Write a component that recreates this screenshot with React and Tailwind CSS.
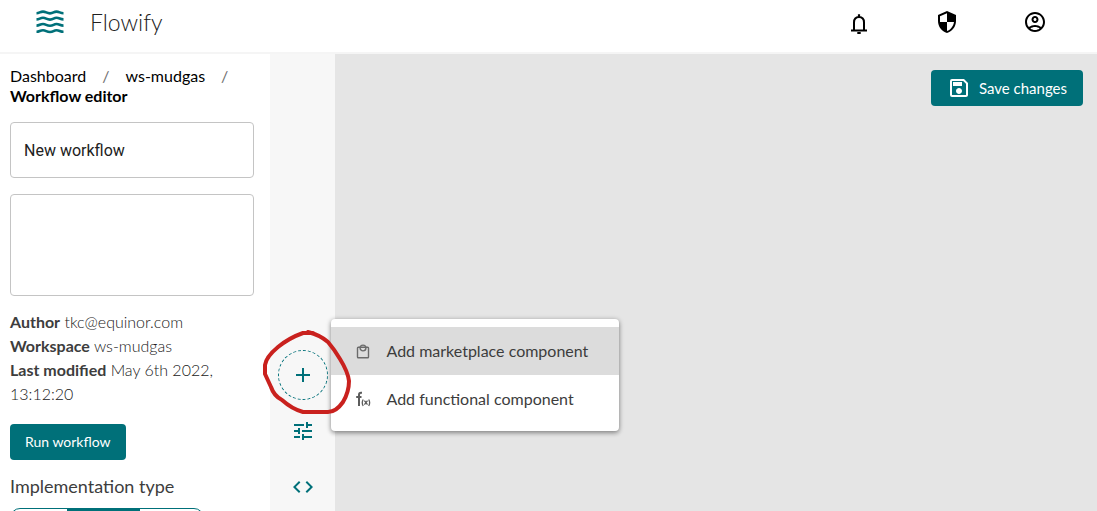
import React from "react";
import {
  MdSecurity,
  MdOutlineAccountCircle,
  MdOutlineSave,
  MdAdd,
  MdTune,
  MdCode,
} from "react-icons/md";

function Logo() {
  return (
    <svg className="h-6 w-7" viewBox="0 0 28 24" fill="none" stroke="#007079" strokeWidth="2.6" aria-hidden="true">
      {[2.6, 8.8, 15, 21.2].map((y) => (
        <path key={y} d={`M0.5 ${y + 0.6}C3.5 ${y + 0.6} 4 ${y - 1} 7 ${y - 1}S10.500 ${y + 0.8} 14 ${y + 0.8}S17.500 ${y - 1} 20.500 ${y - 1}S24 ${y + 0.6} 27.500 ${y + 0.6}`} />
      ))}
    </svg>
  );
}

function BellIcon() {
  return (
    <svg className="size-6" viewBox="0 0 24 24" fill="none" stroke="currentColor" strokeWidth="2" aria-hidden="true">
      <path d="M7 20V12.500C7 9 9 7 12 7S17 9 17 12.500V20M4 20.500H20" />
      <path d="M12 4.300V7M10.300 23H13.700" strokeWidth="2.2" />
    </svg>
  );
}

function BagIcon() {
  return (
    <svg className="size-4 shrink-0" viewBox="0 0 16 16" fill="none" stroke="#6b6b6b" strokeWidth="1.4" aria-hidden="true">
      <rect x="2.500" y="4.300" width="11" height="10.500" rx="0.8" />
      <circle cx="8" cy="5" r="2.900" />
    </svg>
  );
}

function FunctionIcon() {
  return (
    <svg className="size-4 shrink-0" viewBox="0 0 16 16" fill="none" stroke="#5c5c5c" aria-hidden="true">
      <path strokeWidth="2" d="M7 1.800H6Q4 1.800 4 4V15M1.200 6H6.500" />
      <path strokeWidth="1.300" d="M8.200 8.500Q6.300 11.700 8.200 15M13.700 8.500Q15.600 11.700 13.700 15M9.400 9.700L12.500 13.700M12.500 9.700L9.400 13.700" />
    </svg>
  );
}

function Header() {
  return (
    <header className="flex h-[54px] shrink-0 items-start justify-between border-b-2 border-[#f5f5f5] pt-[10px] pr-[50px] pl-9">
      <div className="flex items-center gap-[26px]">
        <Logo />
        <span className="text-[23px] leading-6 font-light text-[#202020]">Flowify</span>
      </div>
      <nav className="flex gap-16 text-2xl text-black" aria-label="Account">
        <button aria-label="Notifications"><BellIcon /></button>
        <button aria-label="Administration"><MdSecurity /></button>
        <button aria-label="Profile"><MdOutlineAccountCircle /></button>
      </nav>
    </header>
  );
}

function Sidebar() {
  return (
    <aside className="flex w-[270px] shrink-0 flex-col overflow-hidden pt-3 pr-4 pl-[10px] text-[#3d3d3d]">
      <nav aria-label="Breadcrumb" className="shrink-0">
        <ol className="flex flex-wrap text-base leading-5 text-black">
          <li><a href="#dashboard">Dashboard</a></li>
          <li className="px-4 text-[#6f6f6f]" aria-hidden="true">/</li>
          <li><a href="#workspace">ws-mudgas</a></li>
          <li className="px-4 text-[#6f6f6f]" aria-hidden="true">/</li>
          <li className="w-full font-bold" aria-current="page">Workflow editor</li>
        </ol>
      </nav>
      <input
        aria-label="Workflow name"
        defaultValue="New workflow"
        className="mt-4 h-14 w-full shrink-0 rounded-sm border border-[#c4c4c4] px-[13px] font-['Roboto',sans-serif] text-base text-[#212121]"
      />
      <textarea
        aria-label="Description"
        className="mt-4 h-[102px] w-full shrink-0 resize-none rounded-sm border border-[#c4c4c4] p-3"
      />
      <div className="mt-[14px] shrink-0 text-base leading-6 font-light text-[#202020]">
        <p><b className="font-bold text-[#3d3d3d]">Author</b> tkc@equinor.com</p>
        <p><b className="font-bold text-[#3d3d3d]">Workspace</b> ws-mudgas</p>
        <p><b className="font-bold text-[#3d3d3d]">Last modified</b> May 6th 2022, 13:12:20</p>
      </div>
      <button className="mt-[18px] h-9 shrink-0 self-start rounded-sm bg-[#007079] px-[15px] text-sm text-white">Run workflow</button>
      <h2 className="mt-4 shrink-0 text-lg leading-5">Implementation type</h2>
      <div className="mt-3 flex h-9 w-[194px] shrink-0 overflow-hidden rounded-[10px] border border-[#007079]">
        <button className="w-14" aria-label="First type" />
        <button className="flex-1 bg-[#007079]" aria-label="Second type" />
        <button className="w-[63px]" aria-label="Third type" />
      </div>
    </aside>
  );
}

function AddMenu() {
  return (
    <div role="menu" className="absolute top-[-31px] left-[53px] w-72 rounded-sm bg-white pt-2 pb-2 text-base text-[#3d3d3d] shadow-[0_1px_5px_rgba(0,0,0,0.4),0_3px_4px_rgba(0,0,0,0.12)]">
      <button role="menuitem" className="flex h-12 w-full items-center gap-4 bg-[#dcdcdc] px-6 whitespace-nowrap">
        <BagIcon />
        Add marketplace component
      </button>
      <button role="menuitem" className="flex h-12 w-full items-center gap-4 px-6 whitespace-nowrap">
        <FunctionIcon />
        Add functional component
      </button>
    </div>
  );
}

function Toolbar() {
  return (
    <div className="flex w-[65px] shrink-0 flex-col items-center bg-[#f7f7f7] pt-[296px] text-2xl text-[#007079]">
      <div className="relative size-[50px]">
        <button aria-label="Add component" className="flex size-full items-center justify-center rounded-full border border-dashed border-[#007079]">
          <MdAdd />
        </button>
        <AddMenu />
        <svg className="pointer-events-none absolute top-[-20px] left-[-15px] h-[84px] w-[88px] max-w-none" viewBox="0 0 88 84" fill="none" stroke="#c9211e" strokeWidth="4" strokeLinejoin="round" strokeLinecap="round" aria-hidden="true">
          <path d="M50 3H40Q26 8 15 17Q3 27 2 35V44L8 57Q11 66 19 70Q29 79 40 82H65Q73 82 80 72Q86 62 86 51Q85 42 77 29Q71 19 65 12Q57 5 45 2" />
        </svg>
      </div>
      <button aria-label="Parameters" className="mt-[19px]"><MdTune /></button>
      <button aria-label="View code" className="mt-8"><MdCode /></button>
    </div>
  );
}

export default function App() {
  return (
    <div className="flex h-screen flex-col overflow-hidden bg-white font-['Lato',sans-serif]">
      <Header />
      <div className="flex min-h-0 flex-1">
        <Sidebar />
        <Toolbar />
        <main className="flex flex-1 items-start justify-end bg-[#e5e5e5] px-[14px] pt-4">
          <button className="flex h-9 items-center gap-2 rounded-sm bg-[#007079] px-4 text-[15px] text-white">
            <MdOutlineSave className="size-6" />
            Save changes
          </button>
        </main>
      </div>
    </div>
  );
}
